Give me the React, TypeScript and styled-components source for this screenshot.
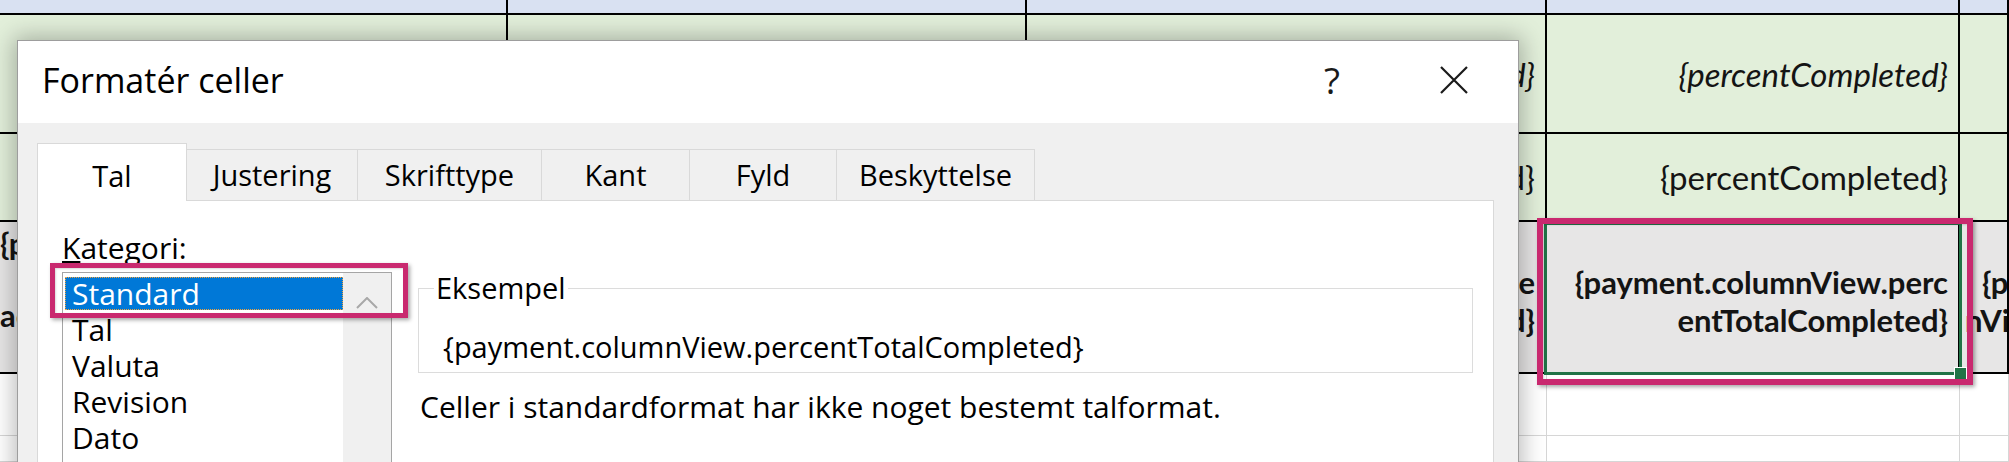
import React from "react";
import styled, { createGlobalStyle, css } from "styled-components";

const FONT_UI = `"Open Sans", "Noto Sans", "DejaVu Sans", sans-serif`;
const FONT_CELL = `Lato, "Liberation Sans", sans-serif`;

const Global = createGlobalStyle`
  html, body { margin: 0; padding: 0; background: #fff; }
  body { width: 2009px; height: 462px; overflow: hidden; }
`;

const Screen = styled.div`
  position: relative;
  width: 2009px;
  height: 462px;
  overflow: hidden;
  background: #fff;
`;

/* ---------- spreadsheet ---------- */

type Tone = "head" | "green" | "gray" | "white";
type Rule = "bold" | "thin";
type FontStyle = "italic" | "bold" | "normal";

const toneBg: Record<Tone, string> = {
  head: "#d9e1f2",
  green: "#e2efda",
  gray: "#e7e6e6",
  white: "#ffffff",
};

const Sheet = styled.div`
  display: grid;
  grid-template-columns: 508px 519px 520px 413px 1fr;
  grid-template-rows: 15px 119px 88px 152px 62px 1fr;
  width: 100%;
  height: 100%;
`;

const Cell = styled.div<{
  $tone: Tone;
  $rule: Rule;
  $align: "start" | "end";
  $valign: "start" | "center";
  $font: FontStyle;
  $padTop: number;
  $padL: number;
  $lh: number;
}>`
  box-sizing: border-box;
  display: flex;
  flex-direction: column;
  justify-content: ${(p) => (p.$valign === "start" ? "flex-start" : "center")};
  align-items: ${(p) => (p.$align === "start" ? "flex-start" : "flex-end")};
  overflow: hidden;
  min-width: 0;
  background: ${(p) => toneBg[p.$tone]};
  ${(p) =>
    p.$rule === "bold"
      ? css`
          border-right: 2px solid #000;
          border-bottom: 2px solid #000;
        `
      : css`
          border-right: 1px solid #d6d6d6;
          border-bottom: 1px solid #d6d6d6;
        `}
  padding: ${(p) => p.$padTop}px 10px 0 ${(p) => p.$padL}px;
  font-family: ${FONT_CELL};
  font-size: ${(p) => (p.$font === "bold" ? 31 : 33)}px;
  line-height: ${(p) => p.$lh}px;
  font-style: ${(p) => (p.$font === "italic" ? "italic" : "normal")};
  font-weight: ${(p) => (p.$font === "bold" ? 700 : 400)};
  color: #141414;
`;

const CellLine = styled.span<{ $indent: number }>`
  display: block;
  white-space: nowrap;
  padding-left: ${(p) => p.$indent}px;
`;

type CellSpec = {
  lines?: string[];
  align?: "start" | "end";
  valign?: "start" | "center";
  padTop?: number;
  padL?: number;
  indent?: number;
  lh?: number;
};

type RowSpec = { tone: Tone; rule: Rule; font: FontStyle; cells: CellSpec[] };

const empty = (): CellSpec[] => [{}, {}, {}, {}, {}];

const rows: RowSpec[] = [
  { tone: "head", rule: "bold", font: "normal", cells: empty() },
  {
    tone: "green",
    rule: "bold",
    font: "italic",
    cells: [{}, {}, { lines: ["ed}"] }, { lines: ["{percentCompleted}"] }, {}],
  },
  {
    tone: "green",
    rule: "bold",
    font: "normal",
    cells: [{}, {}, { lines: ["ed}"] }, { lines: ["{percentCompleted}"] }, {}],
  },
  {
    tone: "gray",
    rule: "bold",
    font: "bold",
    cells: [
      {
        lines: ["{p", "\u00a0", "ac"],
        align: "start",
        valign: "start",
        padTop: 3,
        padL: 0,
        lh: 36,
      },
      {},
      { lines: ["dule", "ted}"], padTop: 8 },
      { lines: ["{payment.columnView.perc", "entTotalCompleted}"], padTop: 8 },
      { lines: ["{pa", "nVi"], align: "start", padTop: 8, padL: 5, indent: 17 },
    ],
  },
  { tone: "white", rule: "thin", font: "normal", cells: empty() },
  { tone: "white", rule: "thin", font: "normal", cells: empty() },
];

/* ---------- overlays on the sheet ---------- */

const CellSelection = styled.div`
  position: absolute;
  left: 1544px;
  top: 222px;
  width: 418px;
  height: 153px;
  box-sizing: border-box;
  border: 3px solid #217346;
`;

const FillHandle = styled.div`
  position: absolute;
  right: -8px;
  bottom: -8px;
  width: 11px;
  height: 11px;
  background: #217346;
  border: 1px solid #fff;
`;

const Annotation = styled.div<{ $x: number; $y: number; $w: number; $h: number; $t: number }>`
  position: absolute;
  left: ${(p) => p.$x}px;
  top: ${(p) => p.$y}px;
  width: ${(p) => p.$w}px;
  height: ${(p) => p.$h}px;
  box-sizing: border-box;
  border: ${(p) => p.$t}px solid #c9296f;
  box-shadow: 2px 2px 4px rgba(0, 0, 0, 0.35), inset 1px 1px 2px rgba(0, 0, 0, 0.15);
  z-index: 5;
`;

/* ---------- dialog ---------- */

const Dialog = styled.section`
  position: absolute;
  left: 17px;
  top: 40px;
  width: 1502px;
  height: 460px;
  box-sizing: border-box;
  border: 1px solid #9d9d9d;
  background: #f0f0f0;
  box-shadow: 0 0 22px 3px rgba(0, 0, 0, 0.28);
  display: flex;
  flex-direction: column;
  font-family: ${FONT_UI};
  color: #000;
  z-index: 2;
`;

const TitleBar = styled.header`
  flex: none;
  height: 82px;
  box-sizing: border-box;
  background: #fff;
  display: flex;
  align-items: center;
  padding: 0 50px 5px 24px;
`;

const Title = styled.h1`
  flex: 1;
  margin: 0;
  font-size: 34px;
  font-weight: 400;
  line-height: 40px;
  color: #000;
`;

const HelpButton = styled.span`
  width: 40px;
  margin-right: 88px;
  text-align: center;
  font-size: 37px;
  line-height: 40px;
  color: #1a1a1a;
`;

const CloseButton = styled.span`
  display: flex;
  width: 28px;
  height: 28px;
`;

const Body = styled.div`
  flex: 1;
  display: flex;
  flex-direction: column;
  padding: 20px 24px 0 19px;
  min-height: 0;
`;

const TabStrip = styled.nav`
  display: flex;
  align-items: flex-end;
  height: 58px;
  margin-bottom: -1px;
  position: relative;
  z-index: 1;
`;

const Tab = styled.div<{ $w: number; $active?: boolean }>`
  box-sizing: border-box;
  width: ${(p) => p.$w}px;
  display: flex;
  align-items: center;
  justify-content: center;
  border: 1px solid #d9d9d9;
  border-bottom: none;
  font-size: 29px;
  line-height: 40px;
  color: #000;
  ${(p) =>
    p.$active
      ? css`
          height: 58px;
          padding-top: 6px;
          background: #fff;
        `
      : css`
          height: 51px;
          margin-bottom: 1px;
          background: #f0f0f0;
          border-left: none;
        `}
`;

const Panel = styled.div`
  flex: 1;
  display: flex;
  gap: 26px;
  background: #fff;
  border: 1px solid #d9d9d9;
  padding: 27px 20px 0 24px;
`;

const CategoryColumn = styled.div`
  width: 330px;
  flex: none;
  display: flex;
  flex-direction: column;
`;

const FieldLabel = styled.div`
  font-size: 30px;
  line-height: 40px;
  height: 40px;
  margin-bottom: 4px;
`;

const ListBox = styled.div`
  display: flex;
  height: 300px;
  box-sizing: border-box;
  border: 1px solid #a5a5a5;
`;

const ListItems = styled.ul`
  flex: 1;
  margin: 0;
  padding: 4px 0 0;
  list-style: none;
`;

const ListItem = styled.li<{ $selected?: boolean }>`
  height: 33px;
  margin: 0 0 3px 2px;
  padding-left: 7px;
  font-size: 30px;
  line-height: 33px;
  color: #000;
  ${(p) =>
    p.$selected &&
    css`
      background: #0078d7;
      color: #fff;
      outline: 1px dotted #f3a33c;
      outline-offset: -1px;
    `}
`;

const ScrollTrack = styled.div`
  width: 48px;
  background: #f0f0f0;
  display: flex;
  flex-direction: column;
  align-items: center;
`;

const ScrollButton = styled.div`
  height: 60px;
  width: 100%;
  display: flex;
  align-items: center;
  justify-content: center;
`;

const SampleColumn = styled.div`
  flex: 1;
  display: flex;
  flex-direction: column;
  min-width: 0;
`;

const GroupBox = styled.fieldset`
  margin: 40px 0 0;
  padding: 0 0 5px 0;
  border: 1px solid #dcdcdc;
  min-width: 0;
`;

const GroupLegend = styled.legend`
  margin-left: 15px;
  padding: 0 2px;
  font-size: 29px;
  line-height: 40px;
  color: #000;
`;

const SampleText = styled.div`
  margin-top: 19px;
  padding-left: 24px;
  font-size: 29px;
  line-height: 40px;
  white-space: nowrap;
`;

const Description = styled.p`
  margin: 14px 0 0;
  padding-left: 2px;
  font-size: 30px;
  line-height: 40px;
  white-space: nowrap;
`;

const tabs = [
  { label: "Tal", w: 150 },
  { label: "Justering", w: 171 },
  { label: "Skrifttype", w: 184 },
  { label: "Kant", w: 148 },
  { label: "Fyld", w: 147 },
  { label: "Beskyttelse", w: 198 },
];

const categories = ["Standard", "Tal", "Valuta", "Revision", "Dato"];

export default function App() {
  return (
    <>
      <Global />
      <Screen>
        <Sheet>
          {rows.map((row, r) =>
            row.cells.map((c, ci) => (
              <Cell
                key={`${r}-${ci}`}
                $tone={row.tone}
                $rule={row.rule}
                $font={row.font}
                $align={c.align ?? "end"}
                $valign={c.valign ?? "center"}
                $padTop={c.padTop ?? 0}
                $padL={c.padL ?? 10}
                $lh={c.lh ?? 38}
              >
                {(c.lines ?? []).map((t, i) => (
                  <CellLine key={i} $indent={i === 0 ? c.indent ?? 0 : 0}>
                    {t}
                  </CellLine>
                ))}
              </Cell>
            ))
          )}
        </Sheet>

        <CellSelection>
          <FillHandle />
        </CellSelection>

        <Dialog>
          <TitleBar>
            <Title>Formatér celler</Title>
            <HelpButton>?</HelpButton>
            <CloseButton>
              <svg width="28" height="28" viewBox="0 0 28 28">
                <path d="M1 1 L27 27 M27 1 L1 27" stroke="#1a1a1a" strokeWidth="2.2" fill="none" />
              </svg>
            </CloseButton>
          </TitleBar>
          <Body>
            <TabStrip>
              {tabs.map((t, i) => (
                <Tab key={t.label} $w={t.w} $active={i === 0}>
                  {t.label}
                </Tab>
              ))}
            </TabStrip>
            <Panel>
              <CategoryColumn>
                <FieldLabel>
                  <u>K</u>ategori:
                </FieldLabel>
                <ListBox>
                  <ListItems>
                    {categories.map((c, i) => (
                      <ListItem key={c} $selected={i === 0}>
                        {c}
                      </ListItem>
                    ))}
                  </ListItems>
                  <ScrollTrack>
                    <ScrollButton>
                      <svg width="22" height="12" viewBox="0 0 22 12">
                        <polyline points="1,11 11,1 21,11" stroke="#a8a8a8" strokeWidth="2" fill="none" />
                      </svg>
                    </ScrollButton>
                  </ScrollTrack>
                </ListBox>
              </CategoryColumn>
              <SampleColumn>
                <GroupBox>
                  <GroupLegend>Eksempel</GroupLegend>
                  <SampleText>{"{payment.columnView.percentTotalCompleted}"}</SampleText>
                </GroupBox>
                <Description>Celler i standardformat har ikke noget bestemt talformat.</Description>
              </SampleColumn>
            </Panel>
          </Body>
        </Dialog>

        <Annotation $x={50} $y={263} $w={358} $h={55} $t={5} />
        <Annotation $x={1537} $y={218} $w={436} $h={167} $t={6} />
      </Screen>
    </>
  );
}
